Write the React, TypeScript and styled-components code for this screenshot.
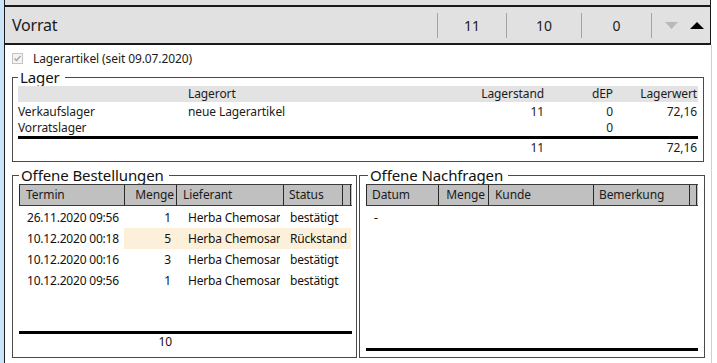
import React from 'react';
import styled, { createGlobalStyle } from 'styled-components';

const GlobalStyle = createGlobalStyle`
  html, body { margin: 0; padding: 0; background: #fff; }
  body {
    font-family: "Noto Sans", "Open Sans", sans-serif;
    font-size: 12px;
    letter-spacing: -0.1px;
    color: #000;
  }
  #root { width: 717px; height: 363px; overflow: hidden; }
  * { box-sizing: border-box; }
`;

const Page = styled.div`
  display: flex;
  width: 717px;
  height: 363px;
  background: #fff;
`;

const SideStrip = styled.div`
  flex: none;
  width: 4px;
  background: #cce4f7;
`;

const Panel = styled.div`
  flex: none;
  width: 708px;
  display: flex;
  flex-direction: column;
  border-left: 1px solid #1e1e1e;
`;

const TopStrip = styled.div`
  flex: none;
  height: 5px;
  margin-right: 1px;
  background: #e1e1e1;
  border-right: 1px solid #1e1e1e;
`;

const HeaderBar = styled.div`
  flex: none;
  height: 40px;
  margin-right: 1px;
  display: flex;
  align-items: center;
  background: #e1e1e1;
  border-top: 2px solid #1a1a1a;
  border-bottom: 2px solid #1a1a1a;
  border-right: 1px solid #1a1a1a;
`;

const Title = styled.div`
  flex: 1;
  padding-left: 7px;
  font-size: 16px;
  letter-spacing: -0.2px;
  color: #1b1b1b;
`;

const Sep = styled.div`
  flex: none;
  width: 1px;
  height: 25px;
  background: #a3a3a3;
`;

const Num = styled.div<{ $w: number }>`
  flex: none;
  width: ${(p) => p.$w}px;
  text-align: center;
  font-size: 14px;
  color: #1b1b1b;
`;

const Arrows = styled.div`
  flex: none;
  width: 58px;
  display: flex;
  align-items: center;
  gap: 12px;
  padding-left: 13px;
`;

const Content = styled.div`
  flex: 1;
  display: flex;
  flex-direction: column;
  padding: 5px 6px 5px 7px;
  border-right: 1px solid #cfcfcf;
`;

const CheckRow = styled.label`
  display: flex;
  align-items: center;
  height: 16px;
  gap: 10px;
  color: #1b1b1b;
`;

const Fieldset = styled.fieldset<{ $pl: number; $pr: number; $pb: number }>`
  margin: 0;
  min-width: 0;
  padding: 0 ${(p) => p.$pr}px ${(p) => p.$pb}px ${(p) => p.$pl}px;
  border: 1px solid #4a4a4a;
  display: flex;
  flex-direction: column;
`;

const Legend = styled.legend<{ $ml: number }>`
  margin-left: ${(p) => p.$ml}px;
  padding: 0 5px 0 2px;
  font-size: 15px;
  line-height: 18px;
  color: #111;
`;

const LagerBox = styled(Fieldset)`
  margin-top: 2px;
  margin-right: 1px;
`;

const LagerRow = styled.div<{ $head?: boolean; $mt?: number }>`
  display: grid;
  grid-template-columns: 170px 266px 90px 69px 84px;
  height: 16px;
  line-height: 16px;
  margin-top: ${(p) => p.$mt ?? 0}px;
  background: ${(p) => (p.$head ? '#e3e3e3' : 'transparent')};
  color: #1b1b1b;
`;

const Cell = styled.div<{ $right?: boolean; $pr?: number }>`
  padding-right: ${(p) => p.$pr ?? 0}px;
  text-align: ${(p) => (p.$right ? 'right' : 'left')};
  white-space: nowrap;
  overflow: hidden;
`;

const ThickLine = styled.div`
  flex: none;
  height: 3px;
  background: #000;
`;

const BottomRow = styled.div`
  flex: 1;
  display: grid;
  grid-template-columns: 345px 346px;
  gap: 2px;
  margin-top: 4px;
`;

const ListHeader = styled.div<{ $cols: string }>`
  display: grid;
  grid-template-columns: ${(p) => p.$cols};
  height: 22px;
  background: #c0c0c0;
  border-top: 1px solid #3a3a3a;
  border-bottom: 1px solid #3a3a3a;
  color: #1b1b1b;
`;

const HeadCell = styled.div<{ $right?: boolean; $last?: boolean; $pl?: number; $pr?: number }>`
  border-left: 1px solid #2a2a2a;
  border-right: ${(p) => (p.$last ? '1px solid #2a2a2a' : 'none')};
  padding: 0 ${(p) => p.$pr ?? 0}px 0 ${(p) => p.$pl ?? 0}px;
  line-height: 20px;
  text-align: ${(p) => (p.$right ? 'right' : 'left')};
  white-space: nowrap;
  overflow: hidden;
`;

const ListBody = styled.div`
  flex: 1;
  display: flex;
  flex-direction: column;
  padding-top: 1px;
`;

const ListRow = styled.div<{ $cols: string }>`
  display: grid;
  grid-template-columns: ${(p) => p.$cols};
  height: 21px;
  line-height: 21px;
  letter-spacing: -0.2px;
  color: #111;
`;

const DataCell = styled.div<{ $right?: boolean; $hl?: boolean; $pl?: number; $pr?: number; $span?: number }>`
  grid-column: span ${(p) => p.$span ?? 1};
  padding: 0 ${(p) => p.$pr ?? 0}px 0 ${(p) => p.$pl ?? 0}px;
  text-align: ${(p) => (p.$right ? 'right' : 'left')};
  background: ${(p) => (p.$hl ? '#fdf0da' : 'transparent')};
  white-space: nowrap;
`;

const Clip = styled.span`
  display: block;
  overflow: hidden;
  white-space: nowrap;
`;

const SumRow = styled.div<{ $cols: string }>`
  display: grid;
  grid-template-columns: ${(p) => p.$cols};
  height: 16px;
  line-height: 16px;
  color: #111;
`;

const BEST_COLS = '105px 52px 107px 59px 9px';
const NACH_COLS = '72px 50px 105px 96px 8px';

const orders = [
  { termin: '26.11.2020 09:56', menge: '1', lieferant: 'Herba Chemosan', status: 'bestätigt', hl: false },
  { termin: '10.12.2020 00:18', menge: '5', lieferant: 'Herba Chemosan', status: 'Rückstand', hl: true },
  { termin: '10.12.2020 00:16', menge: '3', lieferant: 'Herba Chemosan', status: 'bestätigt', hl: false },
  { termin: '10.12.2020 09:56', menge: '1', lieferant: 'Herba Chemosan', status: 'bestätigt', hl: false },
];

const CheckIcon = () => (
  <svg width="11" height="11" viewBox="0 0 11 11">
    <rect x="0.5" y="0.5" width="10" height="10" fill="#f4f4f4" stroke="#c4c4c4" />
    <polyline points="2.5,5.5 4.5,7.5 8.5,3" fill="none" stroke="#a0a0a0" strokeWidth="1.3" />
  </svg>
);

const DownTri = () => (
  <svg width="13" height="7" viewBox="0 0 13 7">
    <polygon points="0,0 13,0 6.5,7" fill="#b9b9b9" />
  </svg>
);

const UpTri = () => (
  <svg width="14" height="7" viewBox="0 0 14 7">
    <polygon points="0,7 14,7 7,0" fill="#000" />
  </svg>
);

export default function App() {
  return (
    <>
      <GlobalStyle />
      <Page>
        <SideStrip />
        <Panel>
          <TopStrip />
          <HeaderBar>
            <Title>Vorrat</Title>
            <Sep />
            <Num $w={68}>11</Num>
            <Sep />
            <Num $w={74}>10</Num>
            <Sep />
            <Num $w={69}>0</Num>
            <Sep />
            <Arrows>
              <DownTri />
              <UpTri />
            </Arrows>
          </HeaderBar>
          <Content>
            <CheckRow>
              <CheckIcon />
              <span>Lagerartikel (seit 09.07.2020)</span>
            </CheckRow>
            <LagerBox $pl={5} $pr={5} $pb={5}>
              <Legend $ml={0}>Lager</Legend>
              <LagerRow $head>
                <Cell />
                <Cell>Lagerort</Cell>
                <Cell $right>Lagerstand</Cell>
                <Cell $right>dEP</Cell>
                <Cell $right>Lagerwert</Cell>
              </LagerRow>
              <LagerRow $mt={2}>
                <Cell>Verkaufslager</Cell>
                <Cell>neue Lagerartikel</Cell>
                <Cell $right>11</Cell>
                <Cell $right>0</Cell>
                <Cell $right>72,16</Cell>
              </LagerRow>
              <LagerRow>
                <Cell>Vorratslager</Cell>
                <Cell />
                <Cell />
                <Cell $right>0</Cell>
                <Cell />
              </LagerRow>
              <ThickLine />
              <LagerRow $mt={1}>
                <Cell />
                <Cell />
                <Cell $right>11</Cell>
                <Cell />
                <Cell $right>72,16</Cell>
              </LagerRow>
            </LagerBox>
            <BottomRow>
              <Fieldset $pl={6} $pr={4} $pb={7}>
                <Legend $ml={0}>Offene Bestellungen</Legend>
                <ListHeader $cols={BEST_COLS}>
                  <HeadCell $pl={6}>Termin</HeadCell>
                  <HeadCell $right $pr={2}>Menge</HeadCell>
                  <HeadCell $pl={6}>Lieferant</HeadCell>
                  <HeadCell $pl={5}>Status</HeadCell>
                  <HeadCell $last />
                </ListHeader>
                <ListBody>
                  {orders.map((o, i) => (
                    <ListRow key={i} $cols={BEST_COLS}>
                      <DataCell $pl={8}>{o.termin}</DataCell>
                      <DataCell $right $pr={5} $hl={o.hl}>{o.menge}</DataCell>
                      <DataCell $pl={12} $pr={3} $hl={o.hl}>
                        <Clip>{o.lieferant}</Clip>
                      </DataCell>
                      <DataCell $pl={7} $hl={o.hl} $span={2}>
                        {o.status}
                      </DataCell>
                    </ListRow>
                  ))}
                </ListBody>
                <ThickLine />
                <SumRow $cols={BEST_COLS}>
                  <Cell />
                  <Cell $right $pr={4}>10</Cell>
                </SumRow>
              </Fieldset>
              <Fieldset $pl={6} $pr={6} $pb={6}>
                <Legend $ml={2}>Offene Nachfragen</Legend>
                <ListHeader $cols={NACH_COLS}>
                  <HeadCell $pl={5}>Datum</HeadCell>
                  <HeadCell $right $pr={3}>Menge</HeadCell>
                  <HeadCell $pl={6}>Kunde</HeadCell>
                  <HeadCell $pl={5}>Bemerkung</HeadCell>
                  <HeadCell $last />
                </ListHeader>
                <ListBody>
                  <ListRow $cols={NACH_COLS}>
                    <DataCell $pl={8}>-</DataCell>
                  </ListRow>
                </ListBody>
                <ThickLine />
              </Fieldset>
            </BottomRow>
          </Content>
        </Panel>
      </Page>
    </>
  );
}
